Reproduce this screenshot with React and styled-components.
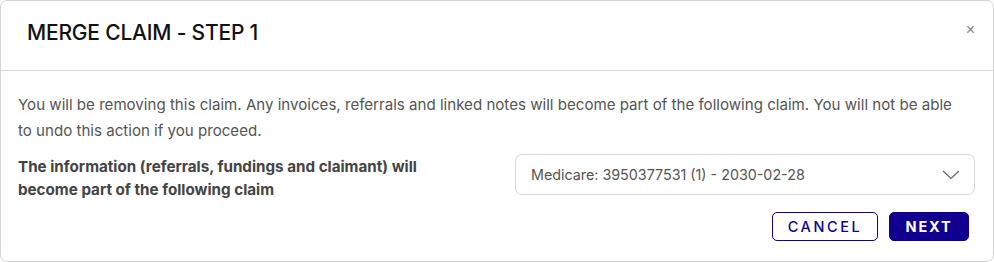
import React from "react";
import styled, { createGlobalStyle } from "styled-components";

const Global = createGlobalStyle`
  html, body { margin: 0; padding: 0; background: #fff; }
  body { font-family: Inter, "Noto Sans", sans-serif; }
  * { box-sizing: border-box; }
`;

const Card = styled.div`
  width: 994px;
  height: 262px;
  border: 1px solid #d3d3d3;
  border-radius: 7px;
  background: #fff;
  display: flex;
  flex-direction: column;
`;

const Header = styled.div`
  height: 70px;
  border-bottom: 1px solid #d8d8d8;
  display: flex;
  align-items: center;
  justify-content: space-between;
  padding: 0 18px 6px 26px;
`;

const Title = styled.h1`
  margin: 0;
  font-size: 21px;
  font-weight: 500;
  color: #111;
  letter-spacing: -0.2px;
`;

const Close = styled.button`
  border: none;
  background: none;
  padding: 0;
  color: #888;
  font-size: 16px;
  line-height: 1;
  cursor: pointer;
  margin-top: -6px;
`;

const Body = styled.div`
  padding: 21px 18px 0 17px;
  display: flex;
  flex-direction: column;
`;

const Text = styled.p`
  margin: 0;
  padding-right: 10px;
  font-size: 15.1px;
  line-height: 26px;
  color: #555;
`;

const Row = styled.div`
  display: flex;
  align-items: flex-start;
  justify-content: space-between;
  margin-top: 10px;
`;

const Label = styled.div`
  font-size: 15.2px;
  line-height: 23px;
  font-weight: 700;
  color: #444;
  width: 450px;
  padding-top: 1px;
`;

const Select = styled.div`
  width: 460px;
  height: 41px;
  border: 1px solid #d5d5dc;
  border-radius: 7px;
  display: flex;
  align-items: center;
  justify-content: space-between;
  padding: 0 14px 0 15px;
  font-size: 14.3px;
  color: #555;
`;

const Actions = styled.div`
  display: flex;
  justify-content: flex-end;
  gap: 11px;
  margin-top: 11px;
  padding-right: 6px;
`;

const Button = styled.button`
  height: 29px;
  border-radius: 5px;
  font-family: inherit;
  font-size: 14.5px;
  font-weight: ${(p) => (p.$primary ? 700 : 500)};
  letter-spacing: ${(p) => (p.$primary ? "1.8px" : "2.6px")};
  padding: 0;
  border: 1px solid #11008f;
  background: ${(p) => (p.$primary ? "#11008f" : "#fff")};
  color: ${(p) => (p.$primary ? "#fff" : "#11008f")};
  cursor: pointer;
  width: ${(p) => p.$w}px;
`;

export default function App() {
  return (
    <>
      <Global />
      <Card>
        <Header>
          <Title>MERGE CLAIM - STEP 1</Title>
          <Close aria-label="close">×</Close>
        </Header>
        <Body>
          <Text>
            You will be removing this claim. Any invoices, referrals and linked notes will become part of the following claim. You will not be able to undo this action if you proceed.
          </Text>
          <Row>
            <Label>The information (referrals, fundings and claimant) will become part of the following claim</Label>
            <Select>
              <span>Medicare: 3950377531 (1) - 2030-02-28</span>
              <svg width="18" height="10" viewBox="0 0 18 10" fill="none">
                <path d="M1 1l8 7.5L17 1" stroke="#666" strokeWidth="1.2" />
              </svg>
            </Select>
          </Row>
          <Actions>
            <Button $w={106}>CANCEL</Button>
            <Button $primary $w={80}>NEXT</Button>
          </Actions>
        </Body>
      </Card>
    </>
  );
}
